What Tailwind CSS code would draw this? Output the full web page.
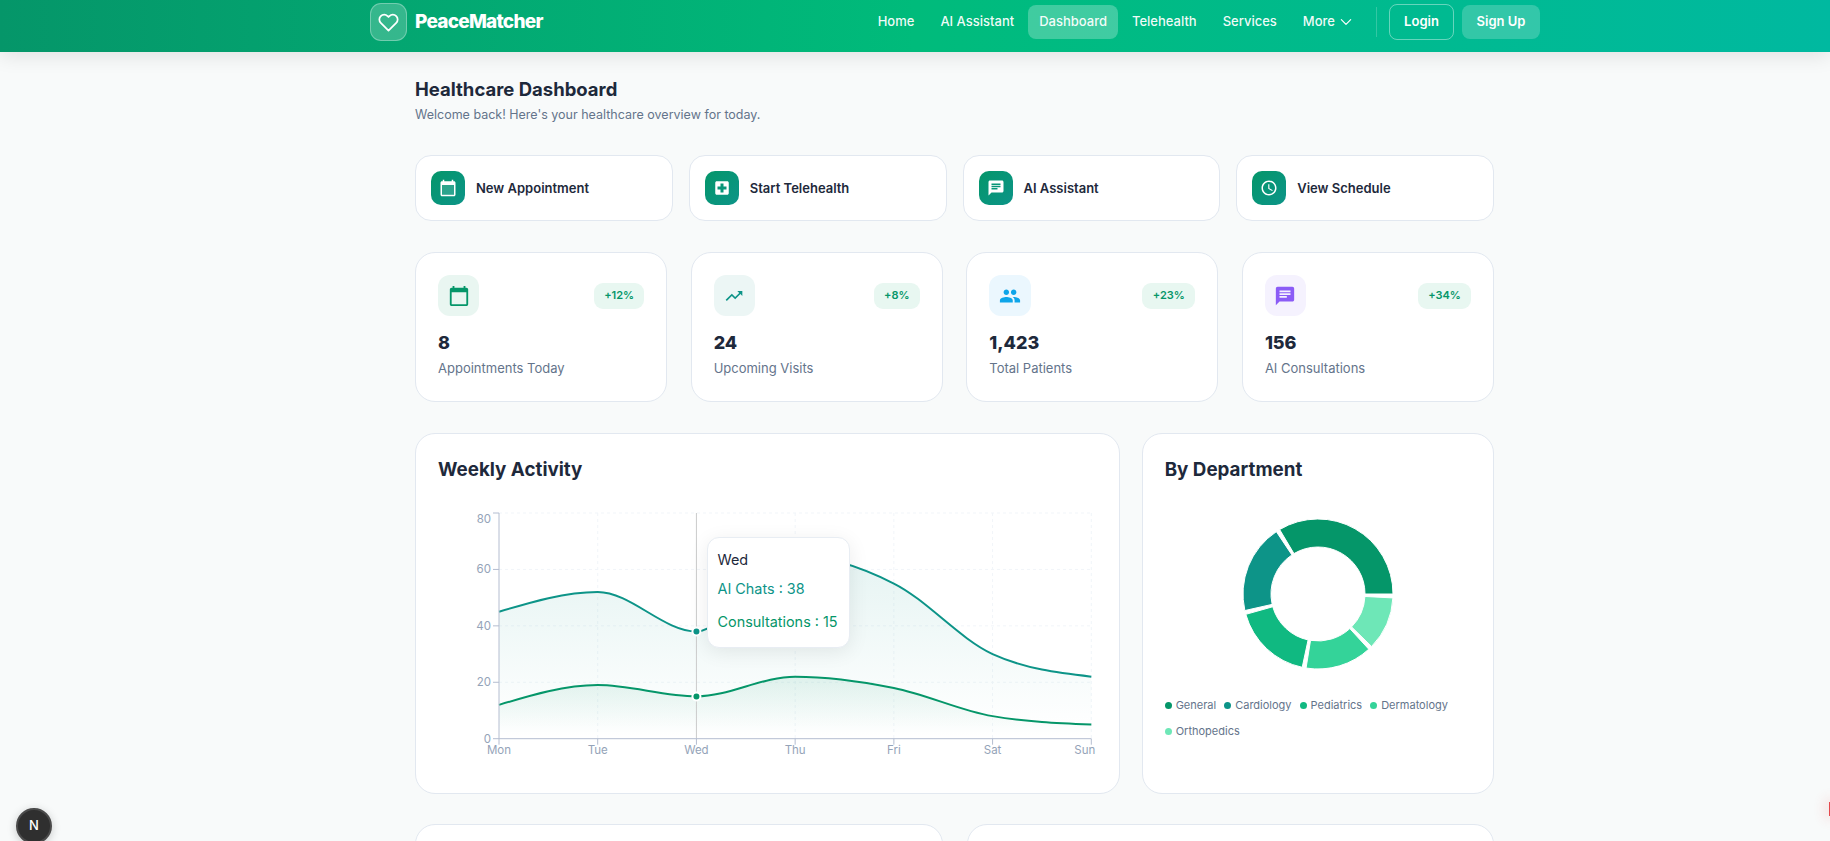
<!DOCTYPE html>
<html>
  <head>
    <meta charset="utf-8" />
    <title>PeaceMatcher</title>
    <script src="https://cdn.jsdelivr.net/npm/@tailwindcss/browser@4"></script>
  </head>
  <body class="relative h-screen overflow-hidden bg-[#f8fafa] font-[Inter,sans-serif] text-[#1e293b] antialiased">
    <!-- Navbar -->
    <header class="h-[52px] w-full bg-gradient-to-r from-[#059669] via-[#00bb7b] to-[#00b9a0] shadow-[0_4px_20px_rgba(0,0,0,0.1)]">
      <div class="ml-[370px] flex h-[44px] w-[1170px] items-center">
        <a class="flex items-center gap-[8px]">
          <span class="flex h-[38px] w-[37px] items-center justify-center rounded-[11px] border border-white/30 bg-white/20">
            <svg class="h-[21px] w-[21px]" viewBox="0 0 24 24" fill="none" stroke="white" stroke-width="2" stroke-linecap="round" stroke-linejoin="round"><path d="M20.84 4.61a5.5 5.5 0 0 0-7.78 0L12 5.67l-1.06-1.06a5.5 5.5 0 0 0-7.78 7.78L12 21.23l8.84-8.84a5.5 5.5 0 0 0 0-7.78z" /></svg>
          </span>
          <span class="text-[19px] font-extrabold tracking-[-0.75px] text-white">PeaceMatcher</span>
        </a>
        <nav class="ml-auto flex items-center gap-[2px] text-[13px] font-medium text-white/95">
          <a class="rounded-lg px-3 py-[8px]">Home</a>
          <a class="rounded-lg px-3 py-[8px]">AI Assistant</a>
          <a class="flex h-[34px] items-center rounded-lg bg-white/25 px-[11px]">Dashboard</a>
          <a class="rounded-lg px-3 py-[8px]">Telehealth</a>
          <a class="rounded-lg px-3 py-[8px]">Services</a>
          <a class="flex items-center gap-[4px] rounded-lg px-3 py-[8px]">More
            <svg class="h-[14px] w-[14px]" viewBox="0 0 24 24" fill="none" stroke="white" stroke-width="2" stroke-linecap="round" stroke-linejoin="round"><path d="M4 8l8 8 8-8" /></svg>
          </a>
          <span class="mr-[10px] ml-[9px] h-[30px] w-px bg-white/20"></span>
          <a class="flex h-[36px] w-[65px] items-center justify-center rounded-lg border border-white/40 font-semibold text-white">Login</a>
          <a class="ml-[6px] flex h-[34px] w-[78px] items-center justify-center rounded-lg bg-white/20 font-semibold text-white">Sign Up</a>
        </nav>
      </div>
    </header>

    <main class="ml-[415px] w-[1079px] pt-[23px]">
      <h1 class="text-[18.5px] leading-[28px] font-bold">Healthcare Dashboard</h1>
      <p class="mt-[2px] text-[12.5px] leading-[20px] text-[#64748b]">Welcome back! Here's your healthcare overview for today.</p>

      <!-- Quick actions -->
      <div class="mt-[30px] grid grid-cols-4 gap-4">
        <a class="flex h-[66px] items-center gap-[11px] rounded-2xl border border-[#e2e8f0] bg-white px-[15px]">
          <span class="flex h-[34px] w-[34px] items-center justify-center rounded-[10px] bg-gradient-to-br from-[#059669] to-[#0d9488]">
            <svg class="h-[18px] w-[18px]" viewBox="0 0 24 24" fill="white"><rect x="4" y="8" width="16" height="13" opacity="0.15" /><path d="M20 3h-1V1h-2v2H7V1H5v2H4c-1.1 0-2 .9-2 2v16c0 1.1.9 2 2 2h16c1.1 0 2-.9 2-2V5c0-1.1-.9-2-2-2zm0 18H4V8h16v13z" /></svg>
          </span>
          <span class="mt-[2px] text-[13px] font-semibold">New Appointment</span>
        </a>
        <a class="flex h-[66px] items-center gap-[11px] rounded-2xl border border-[#e2e8f0] bg-white px-[15px]">
          <span class="flex h-[34px] w-[34px] items-center justify-center rounded-[10px] bg-gradient-to-br from-[#059669] to-[#0d9488]">
            <svg class="h-[18px] w-[18px]" viewBox="0 0 24 24" fill="white"><path d="M19 3H5c-1.1 0-1.99.9-1.99 2L3 19c0 1.1.9 2 2 2h14c1.1 0 2-.9 2-2V5c0-1.1-.9-2-2-2zm-1 11h-4v4h-4v-4H6v-4h4V6h4v4h4v4z" /></svg>
          </span>
          <span class="mt-[2px] text-[13px] font-semibold">Start Telehealth</span>
        </a>
        <a class="flex h-[66px] items-center gap-[11px] rounded-2xl border border-[#e2e8f0] bg-white px-[15px]">
          <span class="flex h-[34px] w-[34px] items-center justify-center rounded-[10px] bg-gradient-to-br from-[#059669] to-[#0d9488]">
            <svg class="h-[18px] w-[18px]" viewBox="0 0 24 24" fill="white"><path d="M20 2H4c-1.1 0-1.99.9-1.99 2L2 22l4-4h14c1.1 0 2-.9 2-2V4c0-1.1-.9-2-2-2zM6 9h12v2H6V9zm8 5H6v-2h8v2zm4-6H6V6h12v2z" /></svg>
          </span>
          <span class="mt-[2px] text-[13px] font-semibold">AI Assistant</span>
        </a>
        <a class="flex h-[66px] items-center gap-[11px] rounded-2xl border border-[#e2e8f0] bg-white px-[15px]">
          <span class="flex h-[34px] w-[34px] items-center justify-center rounded-[10px] bg-gradient-to-br from-[#059669] to-[#0d9488]">
            <svg class="h-[18px] w-[18px]" viewBox="0 0 24 24" fill="white"><path d="M11.99 2C6.47 2 2 6.48 2 12s4.47 10 9.99 10C17.52 22 22 17.52 22 12S17.52 2 11.99 2zM12 20c-4.42 0-8-3.58-8-8s3.58-8 8-8 8 3.58 8 8-3.58 8-8 8zm.5-13H11v6l5.25 3.15.75-1.23-4.5-2.67z" /></svg>
          </span>
          <span class="mt-[2px] text-[13px] font-semibold">View Schedule</span>
        </a>
      </div>

      <!-- Stats -->
      <div class="mt-[31px] grid grid-cols-4 gap-[23.5px]">
        <div class="h-[150px] rounded-[20px] border border-[#e2e8f0] bg-white p-[22px]">
          <div class="flex items-center justify-between">
            <span class="flex h-[41px] w-[41px] items-center justify-center rounded-xl bg-[#e9f6f1]">
              <svg class="h-[22px] w-[22px]" viewBox="0 0 24 24" fill="#059669"><path d="M20 3h-1V1h-2v2H7V1H5v2H4c-1.1 0-2 .9-2 2v16c0 1.1.9 2 2 2h16c1.1 0 2-.9 2-2V5c0-1.1-.9-2-2-2zm0 18H4V8h16v13z" /></svg>
            </span>
            <span class="flex h-[26px] w-[50px] items-center justify-center rounded-[9px] bg-[#e8f7f1] text-[11px] font-semibold text-[#059669]">+12%</span>
          </div>
          <div class="mt-[15px] text-[18px] leading-[24px] font-extrabold">8</div>
          <div class="mt-[3px] text-[13px] leading-[20px] text-[#64748b]">Appointments Today</div>
        </div>
        <div class="h-[150px] rounded-[20px] border border-[#e2e8f0] bg-white p-[22px]">
          <div class="flex items-center justify-between">
            <span class="flex h-[41px] w-[41px] items-center justify-center rounded-xl bg-[#ecf6f5]">
              <svg class="h-[20px] w-[20px]" viewBox="0 0 24 24" fill="#0d9488"><path d="M16 6l2.29 2.29-4.88 4.88-4-4L2 16.59 3.41 18l6-6 4 4 6.3-6.29L22 12V6z" /></svg>
            </span>
            <span class="flex h-[26px] w-[46px] items-center justify-center rounded-[9px] bg-[#e8f7f1] text-[11px] font-semibold text-[#059669]">+8%</span>
          </div>
          <div class="mt-[15px] text-[18px] leading-[24px] font-extrabold">24</div>
          <div class="mt-[3px] text-[13px] leading-[20px] text-[#64748b]">Upcoming Visits</div>
        </div>
        <div class="h-[150px] rounded-[20px] border border-[#e2e8f0] bg-white p-[22px]">
          <div class="flex items-center justify-between">
            <span class="flex h-[41px] w-[42px] items-center justify-center rounded-xl bg-[#ebf7fe]">
              <svg class="h-[22px] w-[22px]" viewBox="0 0 24 24" fill="#0ea5e9"><path d="M16 11c1.66 0 2.99-1.34 2.99-3S17.66 5 16 5c-1.66 0-3 1.34-3 3s1.34 3 3 3zm-8 0c1.66 0 2.99-1.34 2.99-3S9.66 5 8 5C6.34 5 5 6.34 5 8s1.34 3 3 3zm0 2c-2.33 0-7 1.17-7 3.5V19h14v-2.5c0-2.33-4.67-3.5-7-3.5zm8 0c-.29 0-.62.02-.97.05 1.16.84 1.97 1.97 1.97 3.45V19h6v-2.5c0-2.33-4.67-3.5-7-3.5z" /></svg>
            </span>
            <span class="flex h-[26px] w-[53px] items-center justify-center rounded-[9px] bg-[#e8f7f1] text-[11px] font-semibold text-[#059669]">+23%</span>
          </div>
          <div class="mt-[15px] text-[18px] leading-[24px] font-extrabold">1,423</div>
          <div class="mt-[3px] text-[13px] leading-[20px] text-[#64748b]">Total Patients</div>
        </div>
        <div class="h-[150px] rounded-[20px] border border-[#e2e8f0] bg-white p-[22px]">
          <div class="flex items-center justify-between">
            <span class="flex h-[41px] w-[41px] items-center justify-center rounded-xl bg-[#f5f2fe]">
              <svg class="h-[22px] w-[22px]" viewBox="0 0 24 24" fill="#8b5cf6"><path d="M20 2H4c-1.1 0-1.99.9-1.99 2L2 22l4-4h14c1.1 0 2-.9 2-2V4c0-1.1-.9-2-2-2zM6 9h12v2H6V9zm8 5H6v-2h8v2zm4-6H6V6h12v2z" /></svg>
            </span>
            <span class="flex h-[26px] w-[53px] items-center justify-center rounded-[9px] bg-[#e8f7f1] text-[11px] font-semibold text-[#059669]">+34%</span>
          </div>
          <div class="mt-[15px] text-[18px] leading-[24px] font-extrabold">156</div>
          <div class="mt-[3px] text-[13px] leading-[20px] text-[#64748b]">AI Consultations</div>
        </div>
      </div>

      <!-- Charts -->
      <div class="mt-[31px] grid grid-cols-[2fr_1fr] gap-[22px]">
        <div class="relative h-[361px] rounded-[20px] border border-[#e2e8f0] bg-white p-[22px]">
          <h2 class="text-[18.8px] leading-[28px] font-bold">Weekly Activity</h2>
          <svg id="line-chart" class="mt-[21px] block overflow-visible" width="656" height="267" font-size="11.5"></svg>
          <div class="absolute top-[103px] left-[290.5px] flex h-[111px] w-[143px] flex-col rounded-xl border border-[#e8edf3] bg-white pt-[12px] pl-[10px] text-[14.4px] shadow-[0_4px_20px_rgba(0,0,0,0.08)]">
            <span class="leading-[20px]">Wed</span>
            <span class="mt-[9px] leading-[20px] text-[#0d9488]">AI Chats : 38</span>
            <span class="mt-[13px] leading-[20px] text-[#059669]">Consultations : 15</span>
          </div>
        </div>
        <div class="h-[361px] rounded-[20px] border border-[#e2e8f0] bg-white p-[22px]">
          <h2 class="text-[18.8px] leading-[28px] font-bold">By Department</h2>
          <div class="mt-[30px] flex justify-center">
            <svg id="donut" width="160" height="160" viewBox="-80 -80 160 160"></svg>
          </div>
          <div class="mt-[23px] flex flex-wrap items-center gap-x-[8px] gap-y-[10px] text-[11px] leading-[16px] text-[#64748b]">
            <span class="flex items-center gap-[4px]"><i class="h-[7px] w-[7px] rounded-full bg-[#059669]"></i>General</span>
            <span class="flex items-center gap-[4px]"><i class="h-[7px] w-[7px] rounded-full bg-[#0d9488]"></i>Cardiology</span>
            <span class="flex items-center gap-[4px]"><i class="h-[7px] w-[7px] rounded-full bg-[#10b981]"></i>Pediatrics</span>
            <span class="flex items-center gap-[4px]"><i class="h-[7px] w-[7px] rounded-full bg-[#34d399]"></i>Dermatology</span>
            <span class="flex items-center gap-[4px]"><i class="h-[7px] w-[7px] rounded-full bg-[#6ee7b7]"></i>Orthopedics</span>
          </div>
        </div>
      </div>

      <div class="mt-[30px] grid grid-cols-2 gap-6">
        <div class="h-[200px] rounded-[20px] border border-[#e2e8f0] bg-white"></div>
        <div class="h-[200px] rounded-[20px] border border-[#e2e8f0] bg-white"></div>
      </div>
    </main>

    <!-- Dev indicator -->
    <div class="absolute top-[808px] left-[16px] flex h-[36px] w-[36px] items-center justify-center rounded-full border-2 border-[#4a4a4a] bg-[#2f2f2f] text-[13px] font-medium text-white shadow-[0_2px_10px_rgba(0,0,0,0.2)]">N</div>
    <div class="absolute top-[802px] right-0 h-[14px] w-[1px] bg-[#e5484d] shadow-[0_0_12px_4px_rgba(229,72,77,0.15)]"></div>

    <script>
      // weekly activity chart
      var days = ["Mon", "Tue", "Wed", "Thu", "Fri", "Sat", "Sun"];
      var aiChats = [45, 52, 38, 65, 55, 30, 22];
      var consults = [12, 19, 15, 22, 18, 8, 5];
      var left = 61, right = 653.3, top_ = 8, bottom = 233.7;
      var step = (right - left) / 6;
      var X = function (i) { return left + i * step; };
      var Y = function (v) { return bottom - (v / 80) * (bottom - top_); };

      function monotone(vals) {
        var pts = vals.map(function (v, i) { return [X(i), Y(v)]; });
        var n = pts.length, s = [], t = [], i;
        for (i = 0; i < n - 1; i++) s[i] = (pts[i + 1][1] - pts[i][1]) / step;
        for (i = 1; i < n - 1; i++) {
          t[i] = s[i - 1] * s[i] <= 0 ? 0 : (Math.sign(s[i - 1]) + Math.sign(s[i])) *
            Math.min(Math.abs(s[i - 1]), Math.abs(s[i]), 0.25 * Math.abs(s[i - 1] + s[i]));
        }
        t[0] = (3 * s[0] - t[1]) / 2;
        t[n - 1] = (3 * s[n - 2] - t[n - 2]) / 2;
        var d = "M" + pts[0][0] + "," + pts[0][1];
        for (i = 0; i < n - 1; i++) {
          var h = step / 3;
          d += "C" + (pts[i][0] + h) + "," + (pts[i][1] + h * t[i]) + " " +
            (pts[i + 1][0] - h) + "," + (pts[i + 1][1] - h * t[i + 1]) + " " +
            pts[i + 1][0] + "," + pts[i + 1][1];
        }
        return d;
      }

      var g = '<defs>' +
        '<linearGradient id="fillAi" x1="0" y1="0" x2="0" y2="1"><stop offset="5%" stop-color="#0d9488" stop-opacity="0.1"/><stop offset="95%" stop-color="#0d9488" stop-opacity="0"/></linearGradient>' +
        '<linearGradient id="fillCons" x1="0" y1="0" x2="0" y2="1"><stop offset="5%" stop-color="#059669" stop-opacity="0.1"/><stop offset="95%" stop-color="#059669" stop-opacity="0"/></linearGradient>' +
        '</defs>';
      var i;
      // grid
      [80, 60, 40, 20].forEach(function (v) {
        g += '<line x1="' + left + '" x2="' + right + '" y1="' + Y(v) + '" y2="' + Y(v) + '" stroke="#f1f5f9" stroke-dasharray="3 3"/>';
      });
      for (i = 1; i < 7; i++) {
        g += '<line x1="' + X(i) + '" x2="' + X(i) + '" y1="' + top_ + '" y2="' + bottom + '" stroke="#f1f5f9" stroke-dasharray="3 3"/>';
      }
      // areas and lines
      [[aiChats, "#0d9488", "fillAi"], [consults, "#059669", "fillCons"]].forEach(function (s) {
        var d = monotone(s[0]);
        g += '<path d="' + d + 'L' + right + ',' + bottom + 'L' + left + ',' + bottom + 'Z" fill="url(#' + s[2] + ')"/>';
        g += '<path d="' + d + '" fill="none" stroke="' + s[1] + '" stroke-width="2"/>';
      });
      // axes
      g += '<line x1="' + X(2) + '" x2="' + X(2) + '" y1="' + top_ + '" y2="' + bottom + '" stroke="#ccc"/>';
      g += '<path d="M' + left + ',' + top_ + 'V' + bottom + 'H' + right + '" fill="none" stroke="#b4bdd0"/>';
      [0, 20, 40, 60, 80].forEach(function (v) {
        var y = Y(v);
        g += '<line x1="' + (left - 6) + '" x2="' + left + '" y1="' + y + '" y2="' + y + '" stroke="#b4bdd0"/>';
        g += '<text x="' + (left - 8) + '" y="' + (v === 80 ? y + 10 : y + 4) + '" text-anchor="end" fill="#94a3b8">' + v + '</text>';
      });
      days.forEach(function (d, i) {
        g += '<line x1="' + X(i) + '" x2="' + X(i) + '" y1="' + bottom + '" y2="' + (bottom + 6) + '" stroke="#b4bdd0"/>';
        g += '<text x="' + (i === 6 ? X(i) + 4 : X(i)) + '" y="' + (bottom + 15) + '" text-anchor="' + (i === 6 ? "end" : "middle") + '" fill="#94a3b8">' + d + '</text>';
      });
      // active dots
      g += '<circle cx="' + X(2) + '" cy="' + Y(38) + '" r="4" fill="#0d9488" stroke="#fff" stroke-width="2"/>';
      g += '<circle cx="' + X(2) + '" cy="' + Y(15) + '" r="4" fill="#059669" stroke="#fff" stroke-width="2"/>';
      document.getElementById("line-chart").innerHTML = g;

      // department donut
      var depts = [[35, "#059669"], [20, "#0d9488"], [18, "#10b981"], [15, "#34d399"], [12, "#6ee7b7"]];
      var pad = 3, start = 0, out = "", R = 75, r = 47;
      depts.forEach(function (p) {
        var sweep = (p[0] / 100) * (360 - pad * 5);
        var a = (start * Math.PI) / 180, b = ((start + sweep) * Math.PI) / 180;
        var large = sweep > 180 ? 1 : 0;
        out += '<path fill="' + p[1] + '" stroke="#fff" d="M' + R * Math.cos(a) + ',' + -R * Math.sin(a) +
          'A' + R + ',' + R + ' 0 ' + large + ' 0 ' + R * Math.cos(b) + ',' + -R * Math.sin(b) +
          'L' + r * Math.cos(b) + ',' + -r * Math.sin(b) +
          'A' + r + ',' + r + ' 0 ' + large + ' 1 ' + r * Math.cos(a) + ',' + -r * Math.sin(a) + 'Z"/>';
        start += sweep + pad;
      });
      document.getElementById("donut").innerHTML = out;
    </script>
  </body>
</html>
